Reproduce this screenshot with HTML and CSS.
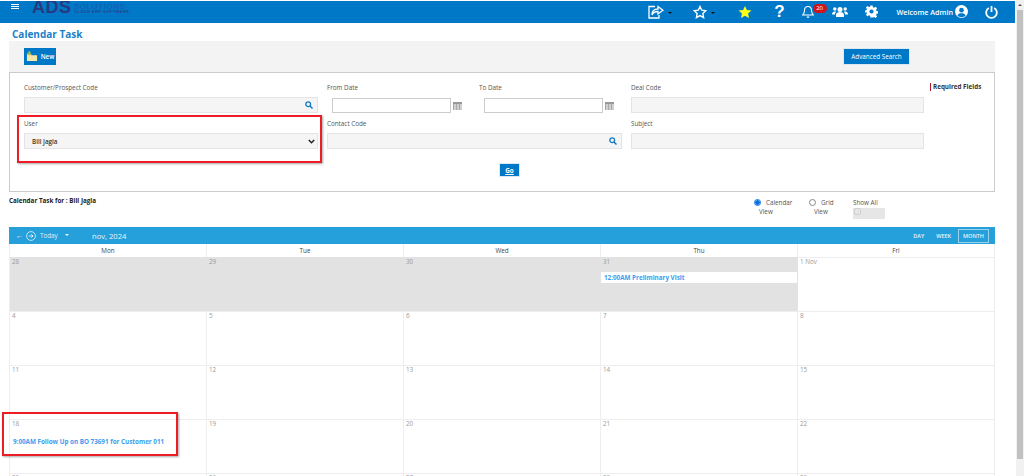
FILE: index.html
```html
<!DOCTYPE html>
<html lang="en">
<head>
    <meta charset="UTF-8">
    <title>Calendar Task</title>
    <link rel="stylesheet" href="styles.css">
</head>
<body>
    <div class="page">
        <div class="topbar">
            <div class="menu_btn"><span></span><span></span><span></span></div>
            <div class="logo">
                <span class="logo_ads">ADS</span>
                <span class="logo_text"><b>SOLUTIONS</b><i>CLOUD ERP SOFTWARE</i></span>
            </div>
            <div class="top_icons">
                <span class="ico ico_share">
                    <svg width="16" height="14" viewBox="0 0 16 14"><path d="M10 1.500V4C5.500 4 4 6.500 4 10c1-2.500 3-3.500 6-3.500V9l5-3.800z" fill="none" stroke="#fff" stroke-width="1.300"/><path d="M7 1.500H1v11.500h10V10" fill="none" stroke="#fff" stroke-width="1.300"/></svg>
                    <i class="caret"></i>
                </span>
                <span class="ico ico_fav">
                    <svg width="14" height="14" viewBox="0 0 24 24"><path d="M12 2.500l3 6.400 7 .9-5.100 4.800 1.300 7-6.200-3.400-6.200 3.400 1.300-7L2 9.800l7-.9z" fill="none" stroke="#fff" stroke-width="2.400"/></svg>
                    <i class="caret"></i>
                </span>
                <span class="ico ico_star">
                    <svg width="14" height="14" viewBox="0 0 24 24"><path d="M12 1.500l3.200 7 7.800.9-5.700 5.300 1.500 7.700-6.800-3.900-6.800 3.900 1.500-7.700L1 9.400l7.800-.9z" fill="#ffff1a"/></svg>
                </span>
                <span class="ico ico_help">?</span>
                <span class="ico ico_bell">
                    <svg width="12" height="14" viewBox="0 0 13 15"><path d="M6.500 1.500c-2.500 0-3.800 2-3.800 4.300 0 2.700-1 3.800-2 5h11.600c-1-1.200-2-2.300-2-5 0-2.300-1.300-4.300-3.800-4.300z" fill="none" stroke="#fff" stroke-width="1.200"/><path d="M5 12.500h3a1.500 1.500 0 0 1-3 0z" fill="#fff"/></svg>
                    <span class="badge">20</span>
                </span>
                <span class="ico ico_users">
                    <svg width="16" height="12" viewBox="0 0 16 12" fill="#fff"><circle cx="8" cy="3.500" r="2.500"/><circle cx="2.800" cy="3" r="1.700"/><circle cx="13.200" cy="3" r="1.700"/><path d="M4 11V9c0-2 1.500-3 4-3s4 1 4 3v2z"/><path d="M0 8.500C0 6.500 1 5.500 3 5.500c.5 0 1 .1 1.300.3C3.500 6.500 3 7.500 3 8.500zM16 8.500c0-2-1-3-3-3-.5 0-1 .1-1.300.3.800.7 1.300 1.700 1.300 2.700z"/></svg>
                </span>
                <span class="ico ico_cog">
                    <svg width="13" height="13" viewBox="0 0 24 24"><path d="M10 1h4l.7 3.300 2 .8 2.800-1.800 2.800 2.800-1.800 2.800.8 2 3.300.7v4l-3.300.7-.8 2 1.800 2.800-2.800 2.800-2.800-1.800-2 .8L14 23h-4l-.7-3.300-2-.8-2.800 1.800-2.800-2.800 1.800-2.800-.8-2L-.6 14.300v-4l3.300-.7.8-2-1.800-2.800 2.800-2.800 2.800 1.800 2-.8z" fill="#fff"/><circle cx="12" cy="12" r="3.800" fill="#0078c8"/></svg>
                </span>
                <span class="welcome">Welcome Admin</span>
                <span class="ico ico_user">
                    <svg width="13" height="13" viewBox="0 0 24 24"><circle cx="12" cy="12" r="12" fill="#fff"/><circle cx="12" cy="9.500" r="4.300" fill="#0078c8"/><path d="M4.500 19.500c1-3.500 4-4.500 7.500-4.500s6.500 1 7.500 4.500C17.500 21.500 15 22.500 12 22.500s-5.500-1-7.500-3z" fill="#0078c8"/></svg>
                </span>
                <span class="ico ico_power">
                    <svg width="13" height="14" viewBox="0 0 13 14"><path d="M3.800 3a5.300 5.300 0 1 0 5.400 0" fill="none" stroke="#fff" stroke-width="1.800"/><path d="M6.500 1v6" stroke="#fff" stroke-width="1.800"/></svg>
                </span>
            </div>
        </div>

        <h1 class="page_title">Calendar Task</h1>

        <div class="toolbar">
            <a class="btn btn_new">
                <svg width="12" height="11" viewBox="0 0 13 12"><path d="M1 3h4l1 1.500h6V11H1z" fill="#f7e8a8"/><path d="M1 3h4l1 1.500H1z" fill="#e8c659"/><path d="M3.500 0v4M1.500 2h4" stroke="#7cc05a" stroke-width="1.500"/></svg>
                New
            </a>
            <a class="btn btn_adv">Advanced Search</a>
        </div>

        <div class="search_box">
            <div class="field_grid">
                <div class="field">
                    <label>Customer/Prospect Code</label>
                    <div class="input grey">
                        <svg class="search_ico" width="8" height="8" viewBox="0 0 8 8"><circle cx="3.200" cy="3.200" r="2.400" fill="none" stroke="#0f77c4" stroke-width="1.300"/><path d="M5 5l2.500 2.500" stroke="#0f77c4" stroke-width="1.500"/></svg>
                    </div>
                </div>
                <div class="dates">
                    <div class="field">
                        <label>From Date</label>
                        <div class="date_wrap">
                            <div class="input date"></div>
                            <span class="cal_ico"></span>
                        </div>
                    </div>
                    <div class="field">
                        <label>To Date</label>
                        <div class="date_wrap">
                            <div class="input date"></div>
                            <span class="cal_ico"></span>
                        </div>
                    </div>
                </div>
                <div class="field">
                    <label>Deal Code</label>
                    <div class="input grey"></div>
                </div>
                <div class="required">Required Fields</div>

                <div class="field">
                    <label>User</label>
                    <div class="input grey select">
                        <span>Bill Jagla</span>
                        <svg width="7" height="5" viewBox="0 0 7 5"><path d="M.8 1l2.700 2.700L6.200 1" fill="none" stroke="#222" stroke-width="1.500"/></svg>
                    </div>
                </div>
                <div class="field">
                    <label>Contact Code</label>
                    <div class="input grey">
                        <svg class="search_ico" width="8" height="8" viewBox="0 0 8 8"><circle cx="3.200" cy="3.200" r="2.400" fill="none" stroke="#0f77c4" stroke-width="1.300"/><path d="M5 5l2.500 2.500" stroke="#0f77c4" stroke-width="1.500"/></svg>
                    </div>
                </div>
                <div class="field">
                    <label>Subject</label>
                    <div class="input grey"></div>
                </div>
            </div>
            <div class="go_row"><a class="btn btn_go">Go</a></div>
        </div>

        <div class="cal_title_row">
            <div class="cal_for">Calendar Task for : Bill Jagla</div>
            <div class="view_opts">
                <div class="view_opt">
                    <span class="radio checked"></span><span class="opt_txt">Calendar</span>
                    <div class="opt_sub">View</div>
                </div>
                <div class="view_opt grid_opt">
                    <span class="radio"></span><span class="opt_txt">Grid</span>
                    <div class="opt_sub">View</div>
                </div>
                <div class="show_all">
                    <div>Show All</div>
                    <div class="toggle"><span></span></div>
                </div>
            </div>
        </div>

        <div class="calendar">
            <div class="cal_head">
                <div class="cal_nav">
                    <span class="arrow_left">&#8592;</span>
                    <svg width="10" height="10" viewBox="0 0 10 10"><circle cx="5" cy="5" r="4.400" fill="none" stroke="#fff" stroke-width=".7"/><path d="M2.800 5h4M5.300 3.300L7 5 5.300 6.700" fill="none" stroke="#fff" stroke-width=".8"/></svg>
                    <span class="today">Today</span>
                    <i class="caret white"></i>
                </div>
                <div class="month">nov, 2024</div>
                <div class="cal_views">
                    <span>DAY</span><span class="week">WEEK</span><span class="active">MONTH</span>
                </div>
            </div>
            <div class="cal_grid">
                <div class="day_name">Mon</div><div class="day_name">Tue</div><div class="day_name">Wed</div><div class="day_name">Thu</div><div class="day_name">Fri</div>

                <div class="cell past">28</div><div class="cell past">29</div><div class="cell past">30</div>
                <div class="cell past">31<div class="event strip">12:00AM Preliminary Visit</div></div>
                <div class="cell">1 Nov</div>

                <div class="cell">4</div><div class="cell">5</div><div class="cell">6</div><div class="cell">7</div><div class="cell">8</div>
                <div class="cell">11</div><div class="cell">12</div><div class="cell">13</div><div class="cell">14</div><div class="cell">15</div>

                <div class="cell">18<div class="event follow">9:00AM Follow Up on BO 73691 for Customer 011</div></div>
                <div class="cell">19</div><div class="cell">20</div><div class="cell">21</div><div class="cell">22</div>

                <div class="cell">25</div><div class="cell">26</div><div class="cell">27</div><div class="cell">28</div><div class="cell">29</div>
            </div>
        </div>

        <!-- callouts drawn on top of the screenshot -->
        <div class="callout callout_user"></div>
        <div class="callout callout_event"></div>
    </div>
    <div class="scrollbar"><i class="scroll_up"></i><span class="thumb"></span></div>
</body>
</html>
```

FILE: styles.css
```css
* {
    margin: 0;
    padding: 0;
    box-sizing: border-box;
}
html, body {
    height: 476px;
    overflow: hidden;
}
body {
    background: #fff;
    font-family: "Open Sans", "Liberation Sans", sans-serif;
    font-size: 6.300px;
    color: #444;
}
.page {
    position: relative;
    width: 1015px;
    height: 476px;
    overflow: hidden;
    padding-top: 1px;
}
.scrollbar {
    position: absolute;
    top: 0;
    right: 0;
    width: 8px;
    height: 476px;
    background: #f1f1f1;
}
.scroll_up {
    position: absolute;
    top: 4px;
    left: 2px;
    border-left: 2px solid transparent;
    border-right: 2px solid transparent;
    border-bottom: 2px solid #555;
}
.thumb {
    display: block;
    margin: 10px 1px 0;
    height: 449px;
    background: #c1c1c1;
}

/* top bar */
.topbar {
    display: flex;
    height: 22px;
    background: #0078c8;
    overflow: hidden;
}
.menu_btn {
    width: 8px;
    margin: 3px 0 0 11px;
}
.menu_btn span {
    display: block;
    height: 1px;
    margin-bottom: 1px;
    background: #fff;
}
.logo {
    display: flex;
    margin: -4px 0 0 13px;
    height: 20px;
}
.logo_ads {
    width: 42px;
    font-family: "Liberation Sans", sans-serif;
    font-weight: bold;
    font-size: 18px;
    line-height: 20px;
    letter-spacing: .5px;
    color: #27397f;
}
.logo_text {
    display: flex;
    flex-direction: column;
    margin-top: 6px;
    white-space: nowrap;
}
.logo_text b {
    font-family: "Liberation Sans", sans-serif;
    font-weight: normal;
    font-size: 8px;
    line-height: 7px;
    letter-spacing: .6px;
    color: #1d58a6;
}
.logo_text i {
    font-style: normal;
    font-weight: bold;
    font-family: "Liberation Sans", sans-serif;
    font-size: 4px;
    line-height: 4px;
    letter-spacing: .45px;
    color: #23468f;
}
.top_icons {
    display: flex;
    align-items: center;
    margin-left: auto;
    padding-right: 17px;
    height: 21px;
    color: #fff;
}
.ico {
    position: relative;
    display: flex;
    align-items: center;
}
.ico_share { margin-right: 21px; }
.ico_fav { margin-right: 23px; }
.ico_star { margin-right: 22px; }
.ico_help {
    margin-right: 17px;
    font-family: "Liberation Sans", sans-serif;
    font-weight: bold;
    font-size: 17px;
}
.ico_bell { margin-right: 18px; }
.ico_users { margin-right: 17px; }
.ico_cog { margin-right: 19px; }
.ico_user { margin: 0 17px 0 2px; }
.welcome {
    font-size: 7.200px;
    font-weight: 600;
}
.caret {
    display: inline-block;
    margin: 2px 0 0 4px;
    border-left: 2px solid transparent;
    border-right: 2px solid transparent;
    border-top: 2px solid #111;
}
.caret.white {
    border-top-color: #fff;
    margin: 0 0 2px 7px;
}
.badge {
    position: absolute;
    top: -1px;
    left: 11px;
    width: 14px;
    height: 9px;
    border-radius: 5px;
    background: #d0141c;
    color: #fff;
    font-size: 6px;
    line-height: 9px;
    text-align: center;
}

/* title + toolbar */
.page_title {
    height: 18px;
    padding: 4px 0 0 12px;
    font-size: 10px;
    line-height: 14px;
    font-weight: 700;
    color: #1a7fc8;
}
.toolbar {
    display: flex;
    align-items: center;
    justify-content: space-between;
    height: 31px;
    margin: 0 20px 0 9px;
    padding: 0 86px 0 15px;
    background: #f3f3f3;
}
.btn {
    display: flex;
    align-items: center;
    justify-content: center;
    background: #0078c8;
    color: #fff;
    font-weight: 600;
}
.btn_new {
    gap: 3px;
    width: 32px;
    height: 17px;
}
.btn_adv {
    width: 65px;
    height: 15px;
    box-shadow: 0 0 0 1px #dbe9f5;
    font-weight: 400;
}

/* search form */
.search_box {
    height: 120px;
    margin: 0 20px 0 9px;
    padding: 10px 0 0 14px;
    border: 1px solid #ccc;
}
.field_grid {
    display: grid;
    grid-template-columns: 294px 295px 293px 60px;
    column-gap: 9px;
    row-gap: 6px;
}
.field label {
    display: block;
    height: 14px;
    line-height: 10px;
    color: #555;
}
.input {
    position: relative;
    height: 16px;
    border: 1px solid #e4e4e4;
}
.input.grey {
    background: #f5f5f5;
}
.search_ico {
    position: absolute;
    top: 3px;
    right: 4px;
}
.select {
    display: flex;
    align-items: center;
    justify-content: space-between;
    padding: 0 2px 0 7px;
    color: #333;
    font-weight: 600;
}
.dates {
    display: grid;
    grid-template-columns: 152px 143px;
}
.date_wrap {
    display: flex;
    align-items: center;
    gap: 2px;
    padding: 1px 0 0 5px;
}
.input.date {
    width: 119px;
    height: 15px;
    border-color: #ccc;
}
.cal_ico {
    width: 9px;
    height: 8px;
    background: repeating-linear-gradient(90deg, #a8a8a8 0 1px, #cfcfcf 1px 3px);
    border-top: 2px solid #999;
}
.required {
    margin-left: -3px;
    padding-left: 2px;
    height: 8px;
    line-height: 7px;
    border-left: 1px solid #b01c2e;
    font-weight: 700;
    color: #333;
    white-space: nowrap;
}
.go_row {
    display: flex;
    justify-content: center;
    padding-top: 15px;
    margin-left: 1px;
}
.btn_go {
    width: 19px;
    height: 12px;
    text-decoration: underline;
    font-weight: 700;
    box-shadow: 0 0 0 1px #dbe9f5;
}

/* calendar title */
.cal_title_row {
    display: flex;
    justify-content: space-between;
    height: 35px;
    margin: 0 130px 0 9px;
}
.cal_for {
    padding-top: 4px;
    font-weight: 700;
    color: #222;
}
.view_opts {
    display: flex;
    padding-top: 6px;
}
.view_opt {
    width: 55px;
    line-height: 9px;
    color: #555;
    white-space: nowrap;
}
.grid_opt {
    width: 44px;
}
.opt_txt {
    margin-left: 5px;
}
.opt_sub {
    padding-left: 5px;
}
.radio {
    display: inline-block;
    width: 7px;
    height: 7px;
    vertical-align: -1px;
    border: 1px solid #888;
    border-radius: 50%;
}
.radio.checked {
    border-color: #0a72e0;
    background: radial-gradient(circle, #0a72e0 0 2px, #fff 2.500px);
}
.show_all {
    width: 32px;
    line-height: 9px;
    color: #555;
}
.toggle {
    height: 11px;
    width: 32px;
    margin-top: 1px;
    background: #e6e6e6;
}
.toggle span {
    display: block;
    width: 7px;
    height: 7px;
    margin-left: 1px;
    border: 1px solid #d0d0d0;
    border-radius: 2px;
}

/* calendar */
.calendar {
    margin: 0 20px 0 9px;
}
.cal_head {
    display: flex;
    align-items: center;
    height: 17px;
    background: #26a0da;
    color: #fff;
}
.cal_nav {
    display: flex;
    align-items: center;
    width: 83px;
    padding-left: 7px;
}
.arrow_left {
    margin-right: 3px;
    font-size: 7px;
}
.today {
    margin-left: 4px;
    color: #dff1fb;
}
.month {
    font-size: 7.600px;
    color: #e8f5fc;
}
.cal_views {
    display: flex;
    align-items: center;
    margin-left: auto;
    padding-right: 6px;
    font-size: 5.500px;
    font-weight: 600;
    color: #e6f4fb;
}
.cal_views span {
    margin-right: 12px;
}
.cal_views .week {
    margin-right: 7px;
}
.cal_views .active {
    margin: 0;
    padding: 0 4px;
    height: 14px;
    line-height: 12px;
    border: 1px solid #9bd3ef;
}
.cal_grid {
    display: grid;
    grid-template-columns: repeat(5, 197px);
    grid-auto-rows: 54px;
    grid-template-rows: 13px;
    border-left: 1px solid #eee;
}
.day_name {
    text-align: center;
    line-height: 13px;
    color: #444;
    border-right: 1px solid #eee;
}
.cell {
    padding: 0 2px;
    line-height: 7px;
    color: #999;
    border-right: 1px solid #eee;
    border-top: 1px solid #eee;
}
.cell.past {
    background: #e2e2e2;
    border-color: #e2e2e2;
}
.event {
    line-height: 9px;
    font-weight: 700;
    color: #3d9bf0;
    white-space: nowrap;
}
.event.strip {
    height: 11px;
    margin: 7px -2px 0;
    padding-left: 3px;
    line-height: 12px;
    background: #fff;
    overflow: hidden;
}
.event.follow {
    margin: 10px 0 0 1px;
}

/* red marks over the page */
.callout {
    position: absolute;
    border: 2px solid #ee1c25;
    box-shadow: 1px 1px 2px rgba(0, 0, 0, .35);
}
.callout_user {
    left: 17px;
    top: 115px;
    width: 305px;
    height: 48px;
}
.callout_event {
    left: 2px;
    top: 412px;
    width: 176px;
    height: 44px;
}
```
